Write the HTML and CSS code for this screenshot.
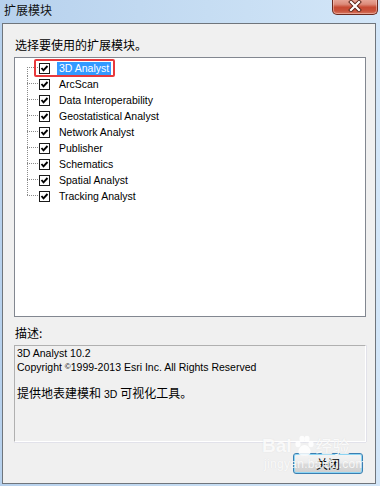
FILE: index.html
```html
<!DOCTYPE html>
<html>
<head>
<meta charset="utf-8">
<link rel="stylesheet" href="styles.css">
</head>
<body>
<div class="window">
  <div class="titlebar">
    <span class="title">扩展模块</span>
    <div class="close">
      <svg width="14" height="12" viewBox="0 0 14 12">
        <path d="M3 2 L11 10 M11 2 L3 10" stroke="#5b2418" stroke-width="4" stroke-linecap="square"/>
        <path d="M3 2 L11 10 M11 2 L3 10" stroke="#ffffff" stroke-width="2.2" stroke-linecap="square"/>
      </svg>
    </div>
  </div>
  <div class="client">
    <div class="label">选择要使用的扩展模块。</div>
    <div class="tree">
      <div class="row first"><span class="conn"></span><svg class="cb" width="11" height="11" viewBox="0 0 11 11"><rect x="0.5" y="0.5" width="10" height="10" fill="#fff" stroke="#1a1a1a"/><polyline points="2.5,5 4.5,7.3 8.5,3" fill="none" stroke="#000" stroke-width="1.9"/></svg><span class="txt sel">3D Analyst</span></div>
      <div class="row"><span class="conn"></span><svg class="cb" width="11" height="11" viewBox="0 0 11 11"><rect x="0.5" y="0.5" width="10" height="10" fill="#fff" stroke="#1a1a1a"/><polyline points="2.5,5 4.5,7.3 8.5,3" fill="none" stroke="#000" stroke-width="1.9"/></svg><span class="txt">ArcScan</span></div>
      <div class="row"><span class="conn"></span><svg class="cb" width="11" height="11" viewBox="0 0 11 11"><rect x="0.5" y="0.5" width="10" height="10" fill="#fff" stroke="#1a1a1a"/><polyline points="2.5,5 4.5,7.3 8.5,3" fill="none" stroke="#000" stroke-width="1.9"/></svg><span class="txt">Data Interoperability</span></div>
      <div class="row"><span class="conn"></span><svg class="cb" width="11" height="11" viewBox="0 0 11 11"><rect x="0.5" y="0.5" width="10" height="10" fill="#fff" stroke="#1a1a1a"/><polyline points="2.5,5 4.5,7.3 8.5,3" fill="none" stroke="#000" stroke-width="1.9"/></svg><span class="txt">Geostatistical Analyst</span></div>
      <div class="row"><span class="conn"></span><svg class="cb" width="11" height="11" viewBox="0 0 11 11"><rect x="0.5" y="0.5" width="10" height="10" fill="#fff" stroke="#1a1a1a"/><polyline points="2.5,5 4.5,7.3 8.5,3" fill="none" stroke="#000" stroke-width="1.9"/></svg><span class="txt">Network Analyst</span></div>
      <div class="row"><span class="conn"></span><svg class="cb" width="11" height="11" viewBox="0 0 11 11"><rect x="0.5" y="0.5" width="10" height="10" fill="#fff" stroke="#1a1a1a"/><polyline points="2.5,5 4.5,7.3 8.5,3" fill="none" stroke="#000" stroke-width="1.9"/></svg><span class="txt">Publisher</span></div>
      <div class="row"><span class="conn"></span><svg class="cb" width="11" height="11" viewBox="0 0 11 11"><rect x="0.5" y="0.5" width="10" height="10" fill="#fff" stroke="#1a1a1a"/><polyline points="2.5,5 4.5,7.3 8.5,3" fill="none" stroke="#000" stroke-width="1.9"/></svg><span class="txt">Schematics</span></div>
      <div class="row"><span class="conn"></span><svg class="cb" width="11" height="11" viewBox="0 0 11 11"><rect x="0.5" y="0.5" width="10" height="10" fill="#fff" stroke="#1a1a1a"/><polyline points="2.5,5 4.5,7.3 8.5,3" fill="none" stroke="#000" stroke-width="1.9"/></svg><span class="txt">Spatial Analyst</span></div>
      <div class="row last"><span class="conn"></span><svg class="cb" width="11" height="11" viewBox="0 0 11 11"><rect x="0.5" y="0.5" width="10" height="10" fill="#fff" stroke="#1a1a1a"/><polyline points="2.5,5 4.5,7.3 8.5,3" fill="none" stroke="#000" stroke-width="1.9"/></svg><span class="txt">Tracking Analyst</span></div>
      <div class="mark"></div>
    </div>
    <div class="label label2">描述:</div>
    <div class="desc">
      <div class="line">3D Analyst 10.2</div>
      <div class="line">Copyright <span class="copy">©</span>1999-2013 Esri Inc. All Rights Reserved</div>
      <div class="line"></div>
      <div class="line"><span class="zh">提供地表建模和</span> 3D <span class="zh">可视化工具。</span></div>
    </div>
    <div class="actions"><button class="btn">关闭</button></div>
    <div class="watermark">
      <div class="wm-top"><span class="wm-bai">Bai</span><svg class="paw" width="22" height="22" viewBox="0 0 22 22"><ellipse cx="5" cy="9" rx="2.6" ry="3.2"/><ellipse cx="9" cy="4" rx="2.6" ry="3.2"/><ellipse cx="14" cy="4" rx="2.6" ry="3.2"/><ellipse cx="18" cy="9" rx="2.6" ry="3.2"/><path d="M11.5 10 C7 10 4 16 6 19 C8 21 15 21 17 19 C19 16 16 10 11.5 10 Z"/></svg><span class="wm-zh">经验</span></div>
      <div class="wm-url">jingyan.baidu.com</div>
    </div>
  </div>
</div>
</body>
</html>
```

FILE: styles.css
```css
html, body {
  margin: 0;
  padding: 0;
  background: #c3daf0;
}

.window {
  width: 380px;
  height: 486px;
  box-sizing: border-box;
  padding: 0 4px 2px 2px;
  display: flex;
  flex-direction: column;
  background: linear-gradient(to right, #b7d1ed 0%, #c6ddf3 55%, #d3e6f8 100%);
  font-family: "Liberation Sans", "Noto Sans CJK SC", sans-serif;
  position: relative;
  overflow: hidden;
}

.titlebar {
  height: 23px;
  display: flex;
  align-items: flex-start;
  justify-content: space-between;
}

.title {
  font-family: "Noto Sans CJK SC", sans-serif;
  font-size: 12px;
  line-height: 16px;
  margin-top: 2px;
  margin-left: 2px;
  color: #111;
}

.close {
  width: 46px;
  height: 16px;
  box-sizing: border-box;
  margin-top: -1px;
  margin-right: -2px;
  border: 1px solid #6b2a1f;
  border-top: none;
  border-radius: 0 0 5px 5px;
  background: linear-gradient(to bottom, #e9aa9c 0%, #dc8b7a 35%, #c74a33 55%, #c9533c 80%, #d77a64 100%);
  box-shadow: inset 0 0 0 1px rgba(255, 220, 210, 0.45);
  display: flex;
  align-items: center;
  justify-content: center;
}

.close svg {
  display: block;
  margin-top: -1px;
}

.client {
  flex: 1;
  border: 1px solid #6f757c;
  background: #f0f0f0;
  padding: 13px 9px 9px 11px;
  display: flex;
  flex-direction: column;
  align-items: flex-start;
  position: relative;
}

.label {
  font-family: "Noto Sans CJK SC", sans-serif;
  font-size: 12px;
  line-height: 16px;
  height: 16px;
  color: #000;
  padding-left: 1px;
  margin-bottom: 4px;
}

.label2 {
  margin-top: 8px;
}

.tree {
  width: 352px;
  height: 260px;
  box-sizing: border-box;
  border: 1px solid #828790;
  background: #fff;
  padding-top: 2px;
  position: relative;
}

.row {
  height: 16px;
  display: flex;
  align-items: center;
  padding-left: 12px;
}

.conn {
  width: 12px;
  height: 16px;
  flex: none;
  background:
    repeating-linear-gradient(to right, #8a8a8a 0 1px, transparent 1px 2px) 0 7px / 12px 1px no-repeat,
    repeating-linear-gradient(to bottom, #8a8a8a 0 1px, transparent 1px 2px) 0 0 / 1px 16px no-repeat;
}

.row.first .conn {
  background:
    repeating-linear-gradient(to right, #8a8a8a 0 1px, transparent 1px 2px) 0 7px / 12px 1px no-repeat,
    repeating-linear-gradient(to bottom, #8a8a8a 0 1px, transparent 1px 2px) 0 7px / 1px 9px no-repeat;
}

.row.last .conn {
  background:
    repeating-linear-gradient(to right, #8a8a8a 0 1px, transparent 1px 2px) 0 7px / 12px 1px no-repeat,
    repeating-linear-gradient(to bottom, #8a8a8a 0 1px, transparent 1px 2px) 0 0 / 1px 8px no-repeat;
}

.cb {
  display: block;
  flex: none;
  margin-right: 7px;
}

.txt {
  font-size: 10.5px;
  line-height: 13px;
  height: 13px;
  padding: 0 2px;
  color: #000;
  white-space: nowrap;
}

.txt.sel {
  background: #3399ff;
  color: #fff;
}

.mark {
  position: absolute;
  left: 19px;
  top: 1px;
  width: 81px;
  height: 18px;
  box-sizing: border-box;
  border: 2px solid #e8393c;
  border-radius: 2px;
}

.desc {
  width: 352px;
  height: 97px;
  box-sizing: border-box;
  border-top: 1px solid #b0b0b0;
  border-left: 1px solid #b0b0b0;
  border-right: 1px solid #ffffff;
  border-bottom: 1px solid #ffffff;
  box-shadow: 0 1px 0 #e2e2ea, 1px 0 0 #e2e2ea;
  padding: 1px 2px;
  font-size: 10.5px;
  color: #000;
}

.line {
  height: 13px;
  line-height: 13px;
  white-space: nowrap;
}

.copy {
  font-size: 8px;
  vertical-align: 2px;
}

.zh {
  font-family: "Noto Sans CJK SC", sans-serif;
  font-size: 12px;
}

.actions {
  align-self: stretch;
  display: flex;
  justify-content: flex-end;
  margin-top: 11px;
  padding-right: 3px;
}

.btn {
  width: 70px;
  height: 21px;
  box-sizing: border-box;
  margin: 0;
  padding: 0;
  border: 1px solid #3c7fb1;
  border-radius: 3px;
  background: linear-gradient(to bottom, #f4f4f4 0%, #ececec 48%, #dcdcdc 52%, #cfcfcf 100%);
  box-shadow: inset 0 0 0 1px #8cd6f5;
  font-family: "Noto Sans CJK SC", sans-serif;
  font-size: 12px;
  line-height: 17px;
  color: #000;
}

.watermark {
  position: absolute;
  left: 259px;
  top: 411px;
  width: 100px;
  color: rgba(255, 255, 255, 0.85);
  text-shadow: 0 0 1px rgba(180, 180, 180, 0.35);
  pointer-events: none;
}

.wm-top {
  display: flex;
  align-items: center;
  height: 22px;
}

.wm-bai {
  font-family: "Liberation Sans", sans-serif;
  font-weight: bold;
  font-size: 19px;
  line-height: 22px;
}

.paw {
  display: block;
  fill: rgba(255, 255, 255, 0.85);
  margin: 0 1px;
}

.wm-zh {
  font-family: "Noto Sans CJK SC", sans-serif;
  font-size: 17px;
  line-height: 22px;
}

.wm-url {
  font-family: "Liberation Sans", sans-serif;
  font-size: 12px;
  line-height: 14px;
  letter-spacing: 0.3px;
  margin-left: 2px;
}
```
